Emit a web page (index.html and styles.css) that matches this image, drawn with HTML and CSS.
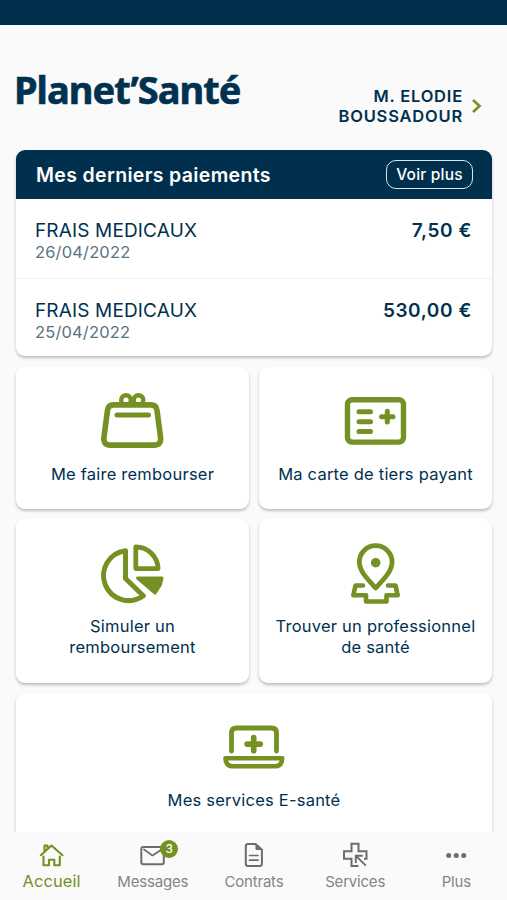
FILE: index.html
```html
<!DOCTYPE html>
<html lang="fr">
<head>
<meta charset="utf-8">
<meta name="viewport" content="width=device-width, initial-scale=1">
<title>Planet'Santé</title>
<link rel="stylesheet" href="styles.css">
</head>
<body>
<div class="app">
  <div class="status-bar"></div>
  <header class="header">
    <h1 class="logo">Planet’Santé</h1>
    <div class="profile">
      <span class="profile-name">M. ELODIE<br>BOUSSADOUR</span>
      <svg class="chevron" width="12" height="16" viewBox="0 0 12 16"><path d="M2 2l6.500 6L2 14"/></svg>
    </div>
  </header>
  <main class="content">
    <section class="card payments">
      <div class="payments-head">
        <h2>Mes derniers paiements</h2>
        <button class="more">Voir plus</button>
      </div>
      <div class="payment">
        <div><div class="label">FRAIS MEDICAUX</div><div class="date">26/04/2022</div></div>
        <div class="amount">7,50 €</div>
      </div>
      <div class="payment">
        <div><div class="label">FRAIS MEDICAUX</div><div class="date">25/04/2022</div></div>
        <div class="amount">530,00 €</div>
      </div>
    </section>
    <div class="tiles">
      <a class="card tile">
        <svg class="icon" width="70" height="64" viewBox="98 387 70 64">
          <circle cx="126" cy="400" r="4.800" stroke-width="4.400"/><circle cx="138.500" cy="400" r="4.800" stroke-width="4.400"/>
          <path d="M113.500 404.900h37.500q5.300 0 6 5.500l3.500 26.500q1.100 8.200-6.200 8.200h-44.100q-7.300 0-6.200-8.200l3.500-26.500q.7-5.500 6-5.500z" stroke-width="5.600" fill="#fff"/>
          <path d="M117 415h31.500" stroke-width="5"/>
        </svg>
        <span>Me faire rembourser</span>
      </a>
      <a class="card tile">
        <svg class="icon" width="70" height="64" viewBox="341 387 70 64">
          <rect x="347.500" y="399.800" width="56" height="42.300" rx="4.500" stroke-width="5.400"/>
          <path d="M359 411.700h11.500M359 421.700h11.500M359 431.500h11.500" stroke-width="5"/>
          <path d="M387.300 411.200v10.800M381.600 416.800h11.400" stroke-width="5"/>
        </svg>
        <span>Ma carte de tiers payant</span>
      </a>
      <a class="card tile">
        <svg class="icon" width="70" height="64" viewBox="97 539.500 70 64">
          <path d="M124.500 551.200A25 25 0 1 0 142.300 596.200L124.500 579z" stroke-width="5"/>
          <path d="M134.800 547.300v21.800h22.300A22.500 22.500 0 0 0 134.800 547.300z" stroke-width="4.800"/>
          <path class="solid" d="M136.500 578.600h24.500l-1.500 6.500-5.500 8.500z" stroke-width="3"/>
        </svg>
        <span>Simuler un<br>remboursement</span>
      </a>
      <a class="card tile">
        <svg class="icon" width="70" height="64" viewBox="341 538.500 70 64">
          <path d="M363 585h-7.500l-2.200 9.700h12.700v6.300h20.500v-6.300h11.200l-2.200-9.700h-7.500" stroke-width="4.600"/>
          <path d="M375.700 587.500C367 578 359.300 570.500 359.300 561.600a16.400 16.400 0 0 1 32.800 0C392.100 570.500 384.400 578 375.700 587.500z" stroke-width="4.800" fill="#fff"/>
          <circle class="solid" cx="375.700" cy="562.200" r="4.200" stroke-width="1.200"/>
        </svg>
        <span>Trouver un professionnel<br>de santé</span>
      </a>
      <a class="card tile wide">
        <svg class="icon" width="70" height="64" viewBox="219 713.500 70 64">
          <path d="M231.500 751.500v-18q0-5 5-5h35q5 0 5 5v18" stroke-width="4.800"/>
          <path d="M253.700 738v13.200M247.100 744.600h13.200" stroke-width="5.600"/>
          <path d="M225.500 758.800h56.700q-.5 8-7 8h-42.700q-6.500 0-7-8z" stroke-width="4.600"/>
        </svg>
        <span>Mes services E-santé</span>
      </a>
    </div>
  </main>
  <nav class="tabs">
    <a class="tab active">
      <svg width="28" height="26" viewBox="38 842 28 26"><path d="M40.800 855.200L51.500 845.500l11 9.700M44.500 850.500v-5h3v2.500" stroke-width="2.100"/><path d="M43.500 856.500v8.800h5.500v-5.500h5.300v5.500h5.500v-8.800" stroke-width="2.100"/></svg>
      <span>Accueil</span>
    </a>
    <a class="tab">
      <svg width="28" height="26" viewBox="139 842 28 26"><rect x="141.300" y="847" width="22.500" height="17.200" rx="2" stroke-width="2"/><path d="M144 849.500l8.500 6 9-6" stroke-width="1.700"/></svg>
      <b class="badge">3</b>
      <span>Messages</span>
    </a>
    <a class="tab">
      <svg width="28" height="26" viewBox="240 842 28 26"><path d="M255.500 844h-7.500q-2.200 0-2.200 2.200v17.600q0 2.200 2.200 2.200h11.700q2.200 0 2.200-2.200v-14z" stroke-width="2"/><path class="fold" d="M256 844.500v5h5.500z" stroke-width="1"/><path d="M249.500 855.500h8.500M249.500 860.200h8.500" stroke-width="1.700"/></svg>
      <span>Contrats</span>
    </a>
    <a class="tab">
      <svg width="28" height="26" viewBox="341 842 28 26"><path class="sharp" d="M358.500 866h-7v-7.300h-7.500v-7.500h7.500v-7.400h7v7.400h8v7.500h-2.500" stroke-width="2"/><path class="sharp" d="M355.800 863v-7.300h7M356.300 856.200l9.500 9.500" stroke-width="1.900"/></svg>
      <span>Services</span>
    </a>
    <a class="tab">
      <svg width="28" height="26" viewBox="442 842 28 26"><g class="dots"><circle cx="448.700" cy="855.600" r="2.500"/><circle cx="456.200" cy="855.600" r="2.500"/><circle cx="463.700" cy="855.600" r="2.500"/></g></svg>
      <span>Plus</span>
    </a>
  </nav>
</div>
</body>
</html>
```
FILE: styles.css
```css
* { box-sizing: border-box; }
body { margin: 0; background: #fafafa; color: #003150; font-family: Inter, "Liberation Sans", sans-serif; }
h1, h2 { margin: 0; }
svg { display: block; overflow: visible; fill: none; stroke: currentColor; stroke-linecap: round; stroke-linejoin: round; }
.app { height: 900px; display: flex; flex-direction: column; overflow: hidden; }
.status-bar { flex: none; height: 25px; background: #00304d; }
.header { flex: none; height: 125px; padding: 0 24px 0 14px; display: flex; justify-content: space-between; }
.logo { margin-top: 38px; font: 700 38px/52px "Noto Sans", sans-serif; letter-spacing: -0.98px; -webkit-text-stroke: 0.6px #003150; }
.profile { display: flex; align-items: center; gap: 9px; height: 42px; margin-top: 60px; }
.profile-name { text-align: right; font-size: 16.5px; font-weight: 600; line-height: 20.5px; letter-spacing: 0.8px; }
.chevron { color: #789323; stroke-width: 2.7; stroke-linecap: butt; stroke-linejoin: miter; margin-left: -1px; }
.content { flex: 1; min-height: 0; overflow: hidden; padding: 0 15px 0 16px; }
.card { background: #fff; border-radius: 9px; box-shadow: 0 2px 3px rgba(0, 0, 0, 0.24); }
.payments { height: 206px; }
.payments-head { height: 49px; padding: 0 19px 0 20px; display: flex; align-items: center; justify-content: space-between; background: #00304d; color: #fff; border-radius: 9px 9px 0 0; }
.payments-head h2 { font-size: 19.5px; font-weight: 600; letter-spacing: 0.34px; }
.more { width: 87px; height: 29px; padding: 0; border: 1.5px solid #dce5ec; border-radius: 10px; background: none; color: #fff; font: 500 15.5px Inter, sans-serif; letter-spacing: 0.2px; }
.payment { height: 79px; padding: 20px 20px 0 19px; display: flex; justify-content: space-between; }
.payment + .payment { border-top: 1px solid #f2f2f2; }
.label { font-size: 19px; line-height: 24px; letter-spacing: 0.15px; }
.date { margin-top: -1px; font-size: 16.5px; line-height: 20px; color: #587484; letter-spacing: 0.15px; }
.amount { font-size: 19px; line-height: 24px; font-weight: 600; letter-spacing: 0.6px; }
.tiles { margin-top: 11px; display: grid; grid-template-columns: 1fr 1fr; grid-template-rows: 142px 164px 180px; gap: 10px; }
.tile { padding-top: 20px; display: flex; flex-direction: column; align-items: center; gap: 13px; text-align: center; font-size: 16.5px; line-height: 20.5px; letter-spacing: 0.22px; }
.icon { flex: none; color: #759023; }
.wide { grid-column: 1 / -1; }
.tabs { flex: none; height: 68px; padding: 10px 0 0 1px; display: grid; grid-template-columns: repeat(5, 101.2px); background: #fafafa; font-size: 15px; letter-spacing: -0.2px; }
.tab { position: relative; display: flex; flex-direction: column; align-items: center; gap: 4px; line-height: 20px; color: #858585; }
.tab svg { color: #6d6d6d; }
.tab.active { gap: 3px; color: #759023; font-size: 16.5px; letter-spacing: 0.05px; }
.tab.active svg { color: #759023; }
.badge { position: absolute; left: 58px; top: -2px; width: 18px; height: 18px; border-radius: 50%; background: #759023; color: #fff; font-size: 12px; font-weight: 500; line-height: 18px; letter-spacing: 0; text-align: center; }
.solid { fill: currentColor; }
.fold, .dots { fill: currentColor; }
.dots { stroke: none; }
.sharp { stroke-linecap: butt; stroke-linejoin: miter; }
```
